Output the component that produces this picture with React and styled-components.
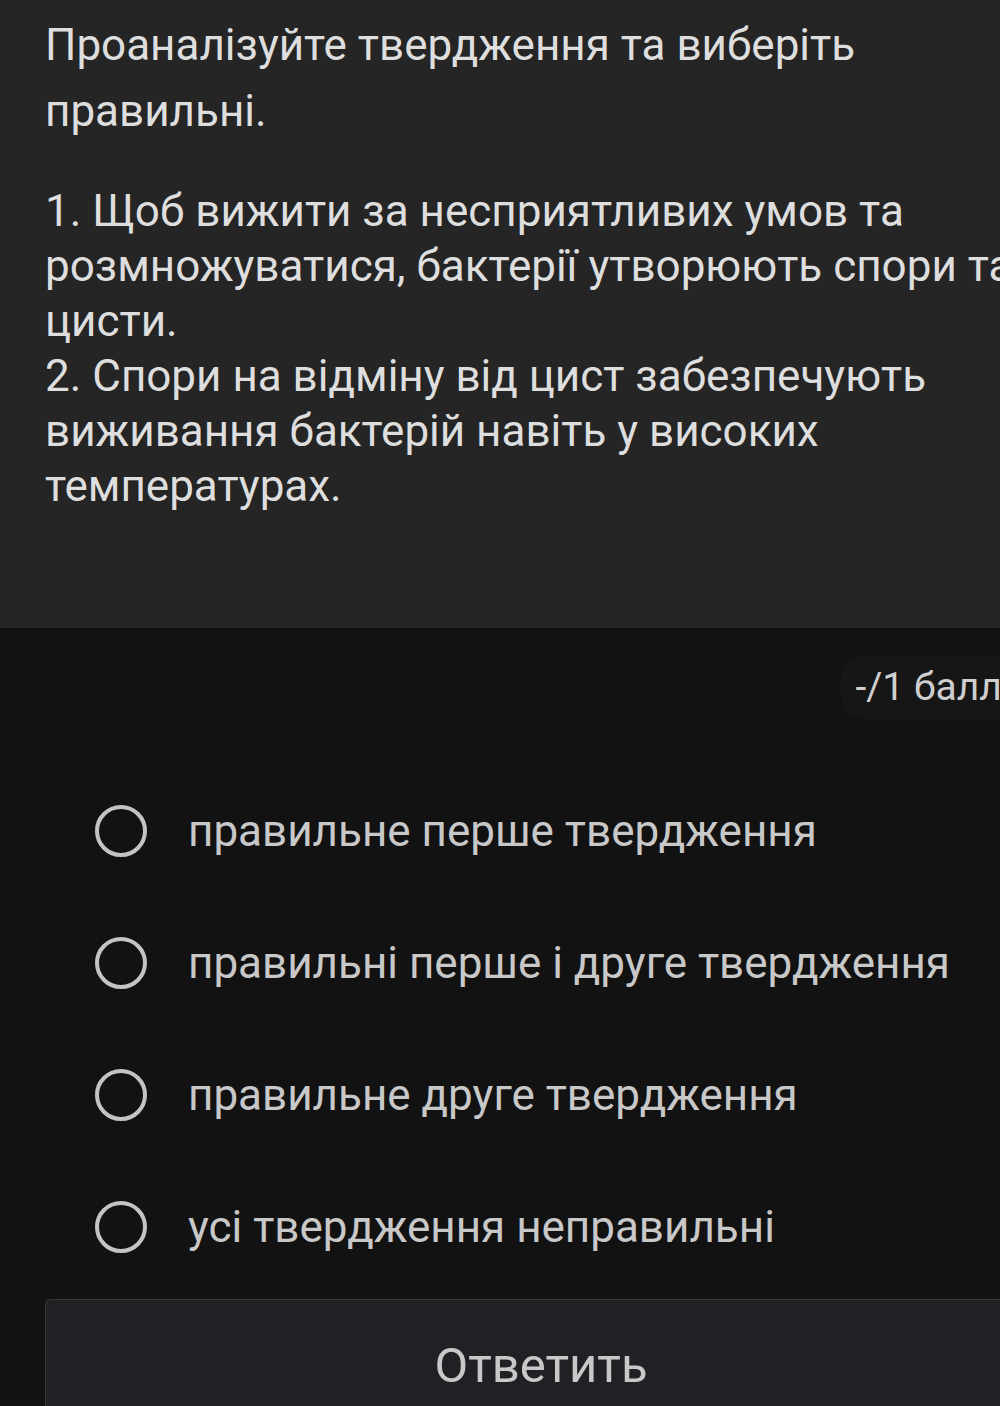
import styled, { createGlobalStyle } from 'styled-components';

const GlobalStyle = createGlobalStyle`
    html, body {
        margin: 0;
        padding: 0;
        background: #121212;
        overflow: hidden;
    }
    body {
        font-family: Roboto, "Noto Sans", sans-serif;
    }
`;

const options = [
    'правильне перше твердження',
    'правильні перше і друге твердження',
    'правильне друге твердження',
    'усі твердження неправильні',
];

const App = () => {
    return (
        <>
            <GlobalStyle />
            <Page>
                <QuestionPanel>
                    <Heading>Проаналізуйте твердження та виберіть правильні.</Heading>
                    <Statements>
                        1. Щоб вижити за несприятливих умов та розмножуватися, бактерії утворюють спори та цисти.
                        <br />
                        2. Спори на відміну від цист забезпечують виживання бактерій навіть у високих температурах.
                    </Statements>
                </QuestionPanel>
                <AnswerPanel>
                    <PointsRow>
                        <PointsChip>-/1 балла</PointsChip>
                    </PointsRow>
                    <OptionList>
                        {options.map((text) => (
                            <OptionRow key={text}>
                                <Radio />
                                <OptionText>{text}</OptionText>
                            </OptionRow>
                        ))}
                    </OptionList>
                    <SubmitButton>Ответить</SubmitButton>
                </AnswerPanel>
            </Page>
        </>
    );
};

export default App;

const Page = styled.div`
    width: 1082px;
    min-height: 1406px;
    display: flex;
    flex-direction: column;
`;

const QuestionPanel = styled.div`
    background: #252525;
    height: 628px;
    box-sizing: border-box;
    padding: 12px 45px 0 45px;
    color: #dedede;
`;

const Heading = styled.div`
    font-size: 44px;
    line-height: 66px;
    margin-bottom: 40px;
`;

const Statements = styled.div`
    font-size: 44px;
    line-height: 55px;
`;

const AnswerPanel = styled.div`
    background: #121212;
    display: flex;
    flex-direction: column;
    padding: 0 45px;
`;

const PointsRow = styled.div`
    display: flex;
    justify-content: flex-end;
    padding-top: 27px;
`;

const PointsChip = styled.div`
    background: #161616;
    border-radius: 22px;
    padding: 0 14px;
    height: 64px;
    display: flex;
    align-items: center;
    font-size: 39px;
    color: #cfcfcf;
`;

const OptionList = styled.div`
    display: flex;
    flex-direction: column;
    padding-top: 46px;
`;

const OptionRow = styled.div`
    height: 132px;
    display: flex;
    align-items: center;
    padding-left: 50px;
    gap: 41px;
`;

const Radio = styled.span`
    width: 44px;
    height: 44px;
    border: 4px solid #c4c4c4;
    border-radius: 50%;
    flex-shrink: 0;
`;

const OptionText = styled.span`
    font-size: 44px;
    color: #c8c8c8;
`;

const SubmitButton = styled.button`
    margin-top: 6px;
    height: 130px;
    width: 100%;
    background: #202124;
    border: 1px solid #3a3a3c;
    border-bottom: none;
    border-radius: 6px 6px 0 0;
    color: #c8c8c8;
    font-family: Roboto, "Noto Sans", sans-serif;
    font-size: 49px;
    padding-bottom: 0;
`;
